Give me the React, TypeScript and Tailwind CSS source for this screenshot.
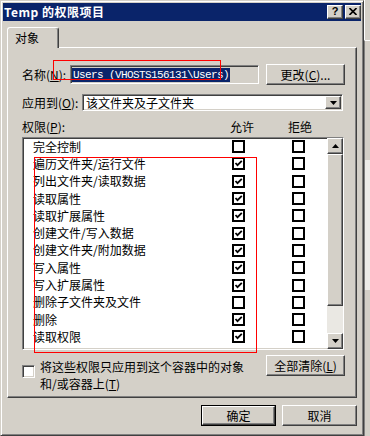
import React from 'react';

const rows: [string, boolean][] = [
  ['完全控制', false],
  ['遍历文件夹/运行文件', true],
  ['列出文件夹/读取数据', true],
  ['读取属性', true],
  ['读取扩展属性', true],
  ['创建文件/写入数据', true],
  ['创建文件夹/附加数据', true],
  ['写入属性', true],
  ['写入扩展属性', true],
  ['删除子文件夹及文件', false],
  ['删除', true],
  ['读取权限', true],
];

// classic 3D edges
const raised =
  'border border-t-white border-l-white border-r-[#404040] border-b-[#404040] shadow-[inset_-1px_-1px_#808080] bg-[#d4d0c8]';
const sunken =
  'border border-t-[#808080] border-l-[#808080] border-r-white border-b-white shadow-[inset_1px_1px_#404040,inset_-1px_-1px_#d4d0c8]';

const Check = ({ on }: { on: boolean }) => (
  <div className="w-[13px] h-[13px] border-[2px] border-black bg-white flex items-center justify-center shrink-0">
    {on && (
      <svg width="9" height="9" viewBox="0 0 9 9">
        <path d="M1.5 4 L3.5 6.2 L7.8 1.8" stroke="black" strokeWidth="1.8" fill="none" />
      </svg>
    )}
  </div>
);

const Arrow = ({ down }: { down?: boolean }) => (
  <svg width="7" height="4" viewBox="0 0 7 4">
    <path d={down ? 'M0 0 H7 L3.5 4 Z' : 'M0 4 H7 L3.5 0 Z'} fill="black" />
  </svg>
);

const App: React.FC = () => {
  return (
    <div className="relative w-[370px] h-[436px] overflow-hidden flex bg-[#d4d0c8] text-black text-[12px] leading-[14px] font-['Noto_Sans_CJK_SC',sans-serif]">
      {/* dialog */}
      <div className="w-[364px] h-[436px] shrink-0 flex flex-col p-[2px] border border-t-[#d4d0c8] border-l-[#d4d0c8] border-r-[#404040] border-b-[#404040] shadow-[inset_1px_1px_#fff,inset_-1px_-1px_#808080]">
        {/* title bar */}
        <div className="h-[18px] bg-[#0a246a] flex items-center justify-between pl-[1px]">
          <span className="text-white font-bold text-[12px] leading-[14px] tracking-[0.5px]">Temp 的权限项目</span>
          <div className="flex gap-[2px] mt-[-1px]">
            <div className={`w-[16px] h-[14px] flex items-center justify-center ${raised}`}>
              <span className="font-bold text-[11px] leading-[11px] font-['Liberation_Sans',sans-serif]">?</span>
            </div>
            <div className={`w-[16px] h-[14px] flex items-center justify-center ${raised}`}>
              <svg width="8" height="7" viewBox="0 0 8 7">
                <path d="M0.5 0 L7.5 7 M7.5 0 L0.5 7" stroke="black" strokeWidth="1.6" />
              </svg>
            </div>
          </div>
        </div>

        {/* tab */}
        <div className="mt-[6px] pl-[4px] flex">
          <div className="relative z-10 -mb-[1px] w-[52px] h-[21px] pl-[7px] flex items-center bg-[#d4d0c8] border-l border-t border-r border-t-white border-l-white border-r-[#404040] shadow-[inset_-1px_0_#808080] rounded-t-[3px]">
            对象
          </div>
        </div>

        {/* tab panel */}
        <div className="ml-[4px] w-[350px] h-[351px] flex flex-col pl-[14px] pt-[16px] border border-t-white border-l-white border-r-[#404040] border-b-[#404040] shadow-[inset_-1px_-1px_#808080]">
          {/* name */}
          <div className="h-[21px] flex items-center">
            <div className="w-[48px]">名称(<u>N</u>):</div>
            <div className={`w-[189px] h-[19px] flex items-center pl-[1px] bg-[#d4d0c8] ${sunken}`}>
              <span className="bg-[#0a246a] text-white h-[14px] px-[1px] text-[11px] leading-[14px] tracking-[-0.6px] font-['Liberation_Mono',monospace]">
                Users (VHOSTS156131\Users)
              </span>
            </div>
            <div className={`ml-[7px] w-[79px] h-[21px] flex items-center justify-center ${raised}`}>
              更改(<u>C</u>)...
            </div>
          </div>

          {/* apply to */}
          <div className="mt-[9px] h-[17px] flex items-center">
            <div className="w-[60px]">应用到(<u>O</u>):</div>
            <div className={`w-[261px] h-[17px] flex items-center justify-between bg-white pl-[3px] ${sunken}`}>
              <span>该文件夹及子文件夹</span>
              <div className={`w-[16px] h-[13px] flex items-center justify-center mr-[1px] ${raised}`}>
                <Arrow down />
              </div>
            </div>
          </div>

          {/* header */}
          <div className="mt-[9px] h-[14px] flex items-center">
            <div className="w-[208px]">权限(<u>P</u>):</div>
            <div className="w-[58px]">允许</div>
            <div>拒绝</div>
          </div>

          {/* permission list */}
          <div className={`mt-[3px] w-[322px] h-[213px] flex bg-white ${sunken}`}>
            <div className="flex-1 flex flex-col">
              {rows.map(([name, on], i) => (
                <div key={i} className="h-[17.3px] flex items-center pl-[10px]">
                  <div className="w-[199px] whitespace-nowrap">{name}</div>
                  <Check on={on} />
                  <div className="w-[47px]" />
                  <Check on={false} />
                </div>
              ))}
            </div>
            <div className="w-[16px] flex flex-col bg-[#eae8e3]">
              <div className={`h-[16px] flex items-center justify-center ${raised}`}>
                <Arrow />
              </div>
              <div className={`h-[152px] ${raised}`} />
              <div className="flex-1" />
              <div className={`h-[16px] flex items-center justify-center ${raised}`}>
                <Arrow down />
              </div>
            </div>
          </div>

          {/* bottom row */}
          <div className="mt-[5px] flex items-start">
            <div className="w-[244px] flex items-start">
              <div className={`mt-[10px] w-[13px] h-[13px] bg-white ${sunken}`} />
              <div className="ml-[5px] mt-[3px] leading-[17px]">
                将这些权限只应用到这个容器中的对象
                <br />
                和/或容器上(<u>T</u>)
              </div>
            </div>
            <div className={`w-[79px] h-[21px] flex items-center justify-center ${raised}`}>
              全部清除(<u>L</u>)
            </div>
          </div>
        </div>

        {/* dialog buttons */}
        <div className="mt-[7px] flex justify-end gap-[6px] pr-[4px]">
          <div className="w-[75px] h-[21px] border border-black">
            <div className={`w-full h-full flex items-center justify-center ${raised}`}>确定</div>
          </div>
          <div className={`w-[75px] h-[21px] flex items-center justify-center ${raised}`}>取消</div>
        </div>
      </div>

      {/* window behind, right edge */}
      <div className="w-[6px] h-[436px] flex flex-col">
        <div className="h-[40px] border-l border-white" />
        <div className="h-[120px] border-l border-[#808080] border-t border-t-white" />
        <div className="h-[130px] border-l border-[#808080] bg-[#ecebe8]" />
        <div className="flex-1 border-l border-[#808080]" />
      </div>

      {/* red annotation boxes */}
      <div className="absolute left-[53px] top-[60px] w-[168px] h-[20px] border border-[#ff0000]" />
      <div className="absolute left-[34px] top-[157px] w-[223px] h-[196px] border border-[#ff0000]" />
    </div>
  );
};

export default App;
